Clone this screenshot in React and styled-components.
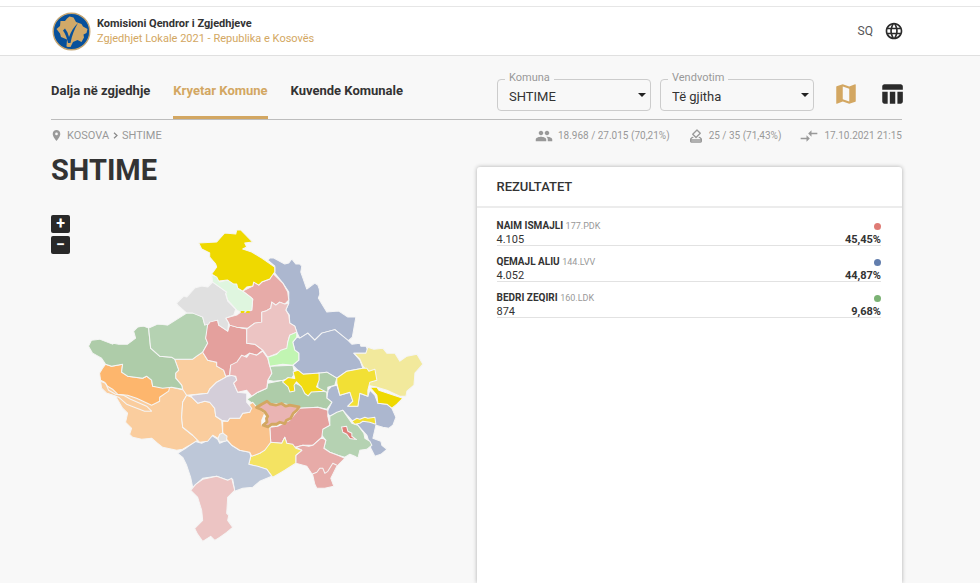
import styled, { createGlobalStyle } from 'styled-components';
import { useState } from 'react';
import {
  MdCompareArrows,
  MdLanguage,
  MdLocationOn,
  MdMap,
  MdOutlineHowToVote,
  MdPeople,
  MdTableChart,
} from 'react-icons/md';

const GlobalStyle = createGlobalStyle`
*, *::before, *::after { box-sizing: border-box; }
body {
margin: 0;
background: #f8f8f8;
color: #333;
font-family: Roboto, "Liberation Sans", sans-serif;
font-size: 12px;
}
button, select { font-family: inherit; }
`;

const Page = styled.div`
min-height: 100vh;
display: flex;
flex-direction: column;
`;

const Header = styled.header`
background: #fff;
padding: 7px 78px 0 52px;
border-bottom: 1px solid #e0e0e0;
background-image: linear-gradient(#e6e6e6, #e6e6e6);
background-size: 100% 1px;
background-position: 0 6px;
background-repeat: no-repeat;
`;

const HeaderRow = styled.div`
display: flex;
align-items: center;
justify-content: space-between;
height: 48px;
`;

const Brand = styled.a`
display: flex;
align-items: center;
gap: 6px;
color: #333;
text-decoration: none;
`;

const BrandText = styled.span`
display: flex;
flex-direction: column;
font-size: 11px;
line-height: 15px;
`;

const BrandName = styled.strong`
font-weight: 700;
`;

const BrandSub = styled.span`
color: #d3a762;
`;

const Language = styled.button`
display: flex;
align-items: center;
gap: 11px;
padding: 0;
border: none;
background: none;
color: #555;
font-size: 12px;
cursor: pointer;
svg { color: #2b2b2b; margin-right: -2px; }
`;

const Main = styled.main`
flex: 1;
display: flex;
flex-direction: column;
padding: 0 78px 0 51px;
`;

const Toolbar = styled.div`
display: flex;
align-items: stretch;
justify-content: space-between;
height: 64px;
border-bottom: 1px solid #bdbdbd;
`;

const Tabs = styled.nav`
display: flex;
gap: 23px;
`;

const Tab = styled.a`
padding-top: 24px;
line-height: 22px;
font-size: 13px;
font-weight: 700;
white-space: nowrap;
text-decoration: none;
color: ${props => props.$active ? '#d3a762' : '#333'};
border-bottom: 3px solid ${props => props.$active ? '#d3a762' : 'transparent'};
`;

const Filters = styled.div`
display: flex;
align-items: center;
gap: 9px;
padding-top: 8px;
`;

const Field = styled.fieldset`
position: relative;
width: 154px;
height: 39px;
margin: 0;
padding: 0;
border: 1px solid #ccc;
border-radius: 4px;
`;

const Legend = styled.legend`
margin-left: 7px;
padding: 0 4px 2px;
font-size: 11px;
line-height: 12px;
color: #999;
`;

const Select = styled.select`
display: block;
width: 100%;
height: 20px;
padding: 0 24px 0 11px;
border: none;
outline: none;
appearance: none;
background: none;
color: #333;
font-size: 13px;
`;

const Caret = styled.span`
position: absolute;
right: 4px;
top: 7px;
border: 4px solid transparent;
border-top-color: #222;
pointer-events: none;
`;

const Views = styled.div`
display: flex;
gap: 20px;
margin: 4px -3px 0 10px;
`;

const ViewButton = styled.button`
display: flex;
padding: 0;
border: none;
background: none;
cursor: pointer;
color: ${props => props.$active ? '#d3a762' : '#2b2b2b'};
`;

const InfoRow = styled.div`
display: flex;
align-items: center;
justify-content: space-between;
height: 31px;
font-size: 11px;
color: #999;
`;

const Crumbs = styled.div`
display: flex;
align-items: center;
gap: 4px;
margin-left: -1px;
a { color: #999; text-decoration: none; }
`;

const Stats = styled.div`
display: flex;
gap: 18px;
font-size: 10px;
`;

const Stat = styled.span`
display: flex;
align-items: center;
gap: 5px;
`;

const Columns = styled.div`
flex: 1;
display: grid;
grid-template-columns: 1fr 1fr;
`;

const Title = styled.h1`
margin: 0;
font-size: 29px;
line-height: 38px;
font-weight: 700;
`;

const MapArea = styled.div`
position: relative;
margin-top: 26px;
svg { display: block; width: 100%; }
`;

const ZoomControls = styled.div`
position: absolute;
left: 0;
top: 0;
display: flex;
flex-direction: column;
gap: 3px;
`;

const ZoomButton = styled.button`
width: 19px;
height: 18px;
padding: 0;
border: none;
border-radius: 2px;
background: #292929;
color: #fff;
font-size: 16px;
font-weight: 700;
line-height: 18px;
cursor: pointer;
`;

const Card = styled.section`
margin-top: 16px;
background: #fff;
border-radius: 3px 3px 0 0;
box-shadow: 0 0 4px rgba(0,0,0,0.3);
`;

const CardTitle = styled.h2`
margin: 0;
padding: 0 20px;
font-size: 13px;
line-height: 39px;
font-weight: 500;
border-bottom: 2px solid #ececec;
`;

const Results = styled.ul`
list-style: none;
margin: 0;
padding: 2px 21px 2px 20px;
`;

const Result = styled.li`
height: 36px;
padding-top: 9px;
border-bottom: 1px solid #e2e2e2;
`;

const ResultLine = styled.div`
display: flex;
align-items: center;
justify-content: space-between;
font-size: 11px;
line-height: 13px;
`;

const Candidate = styled.span`
font-size: 10px;
`;

const Party = styled.span`
font-size: 9px;
color: #999;
`;

const Dot = styled.span`
width: 7px;
height: 7px;
border-radius: 50%;
background: ${props => props.$color};
`;

const results = [
  { name: 'NAIM ISMAJLI', party: '177.PDK', votes: '4.105', share: '45,45%', color: '#df7b75' },
  { name: 'QEMAJL ALIU', party: '144.LVV', votes: '4.052', share: '44,87%', color: '#627ead' },
  { name: 'BEDRI ZEQIRI', party: '160.LDK', votes: '874', share: '9,68%', color: '#7bb274' },
];

// drawn in order, later shapes lie on top of their neighbours
const regions = [
  ['#acb7cf', '268,260 270,258 274,258 285,264 289,263 292,259 296,264 300,264 302,266 301,272 307,289 315,283 318,285 319.5,289 320,294 318.5,298 327,312 339,311 348,317 356,317 352.5,337 348,341 335,329.5 322,333 315,340 308,333 300,338 297,332 295,326 290,323 289.5,315 286,310 289,303 289,292 283,283 275,273 275,266'],
  ['#acb7cf', '297,337 300,338 308,333 315,340 322,333 335,329.5 348,340 352,344 360,343 361,346 366,346 368,350 366,353 354,353 360,360 363,368 347,371 337,378 327,372 319,373 303,374 298,370 293,365 299,360 299,353 295,350 293,342'],
  ['#acb7cf', '328,390 332,386 337,385 340,395 350,392 353,401 348,406 358,406 360,393 368,396 370,390 375,395 378,403 387,404 392,408 396,417 393,425 389,428 383,427 376,425 373,438 381,441 382,445 387,449 381,454 375,456 371,448 367,435 358,425 352,420 343,410 330,416 327,412 332,402 327,398'],
  ['#b5d2b2', '330,425 330,416 337,412 343,410 352,423 358,425 364,433 365,438 370,441 372,445 367,449 360,450 358,458 355,456 350,454 345,457 338,455 330,452 324,448 326,440 322,435 321,430 325,427'],
  ['#e07e78', '341.7,426.7 346.7,426 348,431 352,433 352,436 356.7,439.3 350,438.3 347,434 343,432'],
  ['#f1de30', '352,421 357,418 360,419 365,417 368,418 375,417 376,424 370,422 363,421 360,423 355,424'],
  ['#aecca9', '247,399 252,396 258,392 267,388 268,383 283,380 294,382 302,386 308,391 327,391 327,398 332,402 327,409 318,407 300,408 296,406 282,403 271,404 267,401 257,407 251,402'],
  ['#b5d2b2', '270,366 293,365 295,373 292,378 283,380 274,381 268,380 272,373'],
  ['#aecca9', '318,373 327,372 337,378 335,385 328,387 328,392 318,390'],
  ['#f1dc12', '282.7,381.7 288.3,377.3 295,378.3 293.3,371.7 298.3,370 303.3,374 319.3,372.7 319.3,380 316.7,386.7 325,391 311.7,391.7 308.3,395.7 305,393.3 301.7,386.7 296.7,381.7 294.3,385 295,390.7 290,391.7 288.3,386.7'],
  ['#f2e99c', '354,353 366,353 368,347 374,349 383,348 387,353 395,353 400,361 407,356 417,354 423,364 415,373 414,385 407,391 406,396 400,396 387,390 377,387 368,385 368,372 363,366 360,359'],
  ['#f2e035', '347,371 363,368 367,368 369,371 375,369 377,380 370,382 368,390 368,396 360,393 358,406 348,406 353,401 350,392 340,395 337,383 337,378'],
  ['#efd900', '370,387 377,387 379,390 388,393 403,398 397,404 392,408 387,404 378,403 377,395'],
  ['#e4a19e', '270,427 278,426 290,420 300,408 318,407 328,410 328,416 330,425 323,429 322,437 313,445 303,445 296,447 287,443 285,437 282,443 271,442'],
  ['#e7aba8', '296,447 303,445 309,446 313,445 322,437 326,440 324,448 330,452 338,455 345,458 337,466 334,472 331,478 334,486 325,488 317,488 315,484 313,475 307,466 296,463 296,455 302,450'],
  ['#f4e362', '271,442 282,443 285,437 287,443 293,444 296,448 302,450 296,455 296,463 285,470 280,473 273,477 267,469 249,464 251,456 260,453'],
  ['#bdc7d8', '178,453 186,448 195,441 202,443 208,440 212,435 218,439 220,443 227,440 232,445 240,450 250,452 251,456 249,464 258,466 267,469 272,476 260,481 253,487 243,488 235,491 233,479 228,480 217,476 203,478 193,487 191,477 187,465 183,457'],
  ['#ecc4c3', '191,490 196,484 203,479 217,476 228,480 232,478 235,490 228,497 227,513 229,515 228,520 233,527 227,532 220,537 215,540 211,536 203,541 198,534 195,528 203,520 202,510 198,497'],
  ['#fac38c', '223,421 228,421 230,418 240,418 243,413 250,412 250,404 253,402 257,407 265,413 262,420 262,425 270,427 271,442 265,450 260,453 252,456 250,452 240,450 232,445 227,439 223,433'],
  ['#facd9e', '101,381 102,388 107,393 116,396 123,408 128,413 126,422 132,428 130,434 133,437 142,439 152,438 158,443 163,447 177,450 183,449 190,445 198,440 193,435 183,427 182,417 183,402 187,395 185,390 172,387 150,385 120,380'],
  ['#facd9e', '187,395 192,397 198,403 205,401 210,402 215,408 216,416 222,420 223,433 218,438 213,435 208,441 200,442 193,435 183,427 182,417 183,402'],
  ['#facd9e', '175,359 193,359 197,356 203,352 208,360 217,362 217,366 224,370 226,376 228,376 217,382 210,389 208,393 187,395 183,389 182,385 176,378 176,373 179,370'],
  ['#d4ced9', '228,376 233,375 236,377 237,380 234,383 238,392 247,393 247,402 252,408 250,412 243,413 240,418 230,418 228,421 222,420 216,416 215,408 210,402 205,401 198,403 192,397 192,395 208,393 210,389 217,382'],
  ['#e0e0e0', '220,434 223,432.7 227.3,436 226.7,440.7 220,441.7 218.3,438.3'],
  ['#fdb66d', '106,364 112,366 123,364 122,372 128,376 143,378 147,376 152,380 153,386 170,387 169,391 160,397 160,401 152,405 137,398 128,395 118,394 113,389 108,386 105,382 101,380 100,373 103,368'],
  ['#aecca9', '149,328 144,326 138,327 134,331 136,338 128,344 119,344 114,343 113,344 100,339 92,340 89,346 93,353 102,358 106,364 112,366 123,364 122,372 128,376 143,378 147,376 152,380 153,386 163,388 172,387 183,389 182,385 176,378 176,373 179,370 175,359 172,357 160,356 151,348'],
  ['#b5d2b2', '168,325 187,313 195,313 203,317 205,324 208,324 208,331 206,338 208,343 203,352 197,356 193,359 175,359 172,357 160,356 151,348 149,328 158,324'],
  ['#e4a09d', '208,324 209,321 218,320 219,325 228,331 230,325 237,327 247,329 247,343 255,344 263,350 257,355 250,353 242,358 237,365 231,365 230,375 226,376 224,370 217,366 217,362 208,360 203,352 208,343 206,338'],
  ['#eab4b3', '231,365 237,362 242,355 247,357 250,353 257,355 263,351 268,358 270,366 272,373 268,380 267,388 258,392 252,396 247,390 238,392 234,383 237,380 236,376 230,375'],
  ['#e7aba8', '273,273 283,283 288,292 289,300 285,304 280,302 276,305 272,302 271,308 266,311 262,312 262,322 255,323 248,328 237,327 230,325 226,318 237,315 241,312 252,310 253,299 243,291 253,286 254,282 259,285 262,282 270,279'],
  ['#ecc4c3', '272,302 276,305 280,302 285,304 289,303 286,310 289,315 290,323 295,326 297,332 290,335 288,342 288,349 268,357 263,350 255,344 247,343 247,329 255,323 262,322 262,312 266,311 271,308'],
  ['#c1f5b2', '268,357 277,354 281,350 287,348 288,342 290,335 297,332 297,337 293,342 295,350 299,353 299,360 293,365 283,364 270,366'],
  ['#e0e0e0', '213,282 227,292 226,294 228,301 236,309 234,315 226,318 229,323 228,331 219,325 218,320 210,322 209,324 205,325 203,317 193,313 187,313 178,305 177,303 184,296 187,297 195,288 202,286 208,287'],
  ['#dff6df', '212,275 218,277 220,282 228,280 237,284 239,289 243,291 251,297 253,299 252,310 247,312 241,312 237,310 228,300 226,293 227,292 213,282'],
  ['#efd900', '199,243 217,242 225,233 236,234 237,230 241,230 253,242 245,243 247,247 243,249 252,252 262,258 275,267 275,272 270,279 262,282 259,285 254,282 253,286 247,287 243,291 238,288 237,284 234,284 228,280 219,281 217,277 212,274 217,267 216,264 210,257 210,253 202,249'],
];

const tinyRegions = ['241,311 245,311 244,313 241,313', '247,311 250,311 250,313 246,313'];

const innerBorders = [
  '101,381 106,383 109,390 116,394 124,395 131,399 147,406 152,411 145,411 127,404 119,397 107,393',
  '312,474 317,472 320,468 323,468 325,473 328,471 333,463 337,465',
];

const selectedRegion = '256.7,407.3 262,404 267.3,401 270.7,404 276,405 281.7,403.3 286,406 290,405 299.3,406.7 297,410 293.3,413.3 291,418 286.7,420 285,423.3 280,422 276.7,424 272,424 268.3,426.7 263.3,425 267.3,421.7 266.7,418.3 268,416 265,411.7 261,409';

function Logo() {
  return (
    <svg width="39" height="39" viewBox="0 0 39 39" aria-hidden="true">
      <circle cx="19.5" cy="19.5" r="18.3" fill="#07509b" stroke="#c5a571" strokeWidth="1.4" />
      <path
        fill="#d2a968"
        d="M4.500 17L8 14 8.500 9 13 9 15 6.500 17.500 4.500 21.500 5.500 24 10 29.500 12 31 14.500 35.500 17 34.500 21 31.500 22.500 32 25.500 29.500 30 25.500 28 21 30 18.500 35 14.500 34.500 15 27.500 9 25 8 21.500z"
      />
      <path
        fill="#07509b"
        d="M11 18.500l2-2 2.500 4 1.500 4.500C19 19.500 22 14.500 26 11 22.500 17 20 23 18.500 31h-2.500C15 26 13.500 22 11 18.500z"
      />
      <circle cx="16.5" cy="33.5" r="1.6" fill="#d2a968" />
    </svg>
  );
}

function KosovoMap() {
  return (
    <svg viewBox="51.5 215 425 340" role="img" aria-label="Kosova">
      <g stroke="#f5f5f5" strokeWidth="1" strokeLinejoin="round">
        {regions.map(([fill, points], idx) => (
          <polygon key={idx} fill={fill} points={points} />
        ))}
        {innerBorders.map(points => (
          <polyline key={points} fill="none" points={points} />
        ))}
      </g>
      {tinyRegions.map(points => (
        <polygon key={points} fill="#efd900" points={points} />
      ))}
      <polygon fill="#eab4b3" stroke="#d3a762" strokeWidth="2.8" strokeLinejoin="round" points={selectedRegion} />
    </svg>
  );
}

function SelectField({ id, label, options }) {
  return (
    <Field>
      <Legend><label htmlFor={id}>{label}</label></Legend>
      <Select id={id}>
        {options.map(option => <option key={option}>{option}</option>)}
      </Select>
      <Caret />
    </Field>
  );
}

export default function App() {
  const [view, setView] = useState('map');

  return (
    <>
      <GlobalStyle />
      <Page>
        <Header>
          <HeaderRow>
            <Brand href="#">
              <Logo />
              <BrandText>
                <BrandName>Komisioni Qendror i Zgjedhjeve</BrandName>
                <BrandSub>Zgjedhjet Lokale 2021 - Republika e Kosovës</BrandSub>
              </BrandText>
            </Brand>
            <Language type="button">SQ <MdLanguage size={20} /></Language>
          </HeaderRow>
        </Header>
        <Main>
          <Toolbar>
            <Tabs>
              <Tab href="#">Dalja në zgjedhje</Tab>
              <Tab href="#" $active>Kryetar Komune</Tab>
              <Tab href="#">Kuvende Komunale</Tab>
            </Tabs>
            <Filters>
              <SelectField id="komuna" label="Komuna" options={['SHTIME']} />
              <SelectField id="vendvotim" label="Vendvotim" options={['Të gjitha']} />
              <Views>
                <ViewButton type="button" aria-label="Harta" $active={view === 'map'} onClick={() => setView('map')}>
                  <MdMap size={26} />
                </ViewButton>
                <ViewButton type="button" aria-label="Tabela" $active={view === 'table'} onClick={() => setView('table')}>
                  <MdTableChart size={26} />
                </ViewButton>
              </Views>
            </Filters>
          </Toolbar>
          <InfoRow>
            <Crumbs>
              <MdLocationOn size={13} />
              <a href="#">KOSOVA</a>
              <svg width="5" height="7" viewBox="0 0 5 7" fill="none" stroke="#888" strokeWidth="1.2">
                <path d="M1 .7L4 3.5 1 6.3" />
              </svg>
              <a href="#">SHTIME</a>
            </Crumbs>
            <Stats>
              <Stat><MdPeople size={18} />18.968 / 27.015 (70,21%)</Stat>
              <Stat><MdOutlineHowToVote size={16} />25 / 35 (71,43%)</Stat>
              <Stat><MdCompareArrows size={20} />17.10.2021 21:15</Stat>
            </Stats>
          </InfoRow>
          <Columns>
            <div>
              <Title>SHTIME</Title>
              <MapArea>
                <KosovoMap />
                <ZoomControls>
                  <ZoomButton type="button">+</ZoomButton>
                  <ZoomButton type="button">−</ZoomButton>
                </ZoomControls>
              </MapArea>
            </div>
            <Card>
              <CardTitle>REZULTATET</CardTitle>
              <Results>
                {results.map(row => (
                  <Result key={row.name}>
                    <ResultLine>
                      <Candidate><strong>{row.name}</strong> <Party>{row.party}</Party></Candidate>
                      <Dot $color={row.color} />
                    </ResultLine>
                    <ResultLine>
                      <span>{row.votes}</span>
                      <strong>{row.share}</strong>
                    </ResultLine>
                  </Result>
                ))}
              </Results>
            </Card>
          </Columns>
        </Main>
      </Page>
    </>
  );
}
